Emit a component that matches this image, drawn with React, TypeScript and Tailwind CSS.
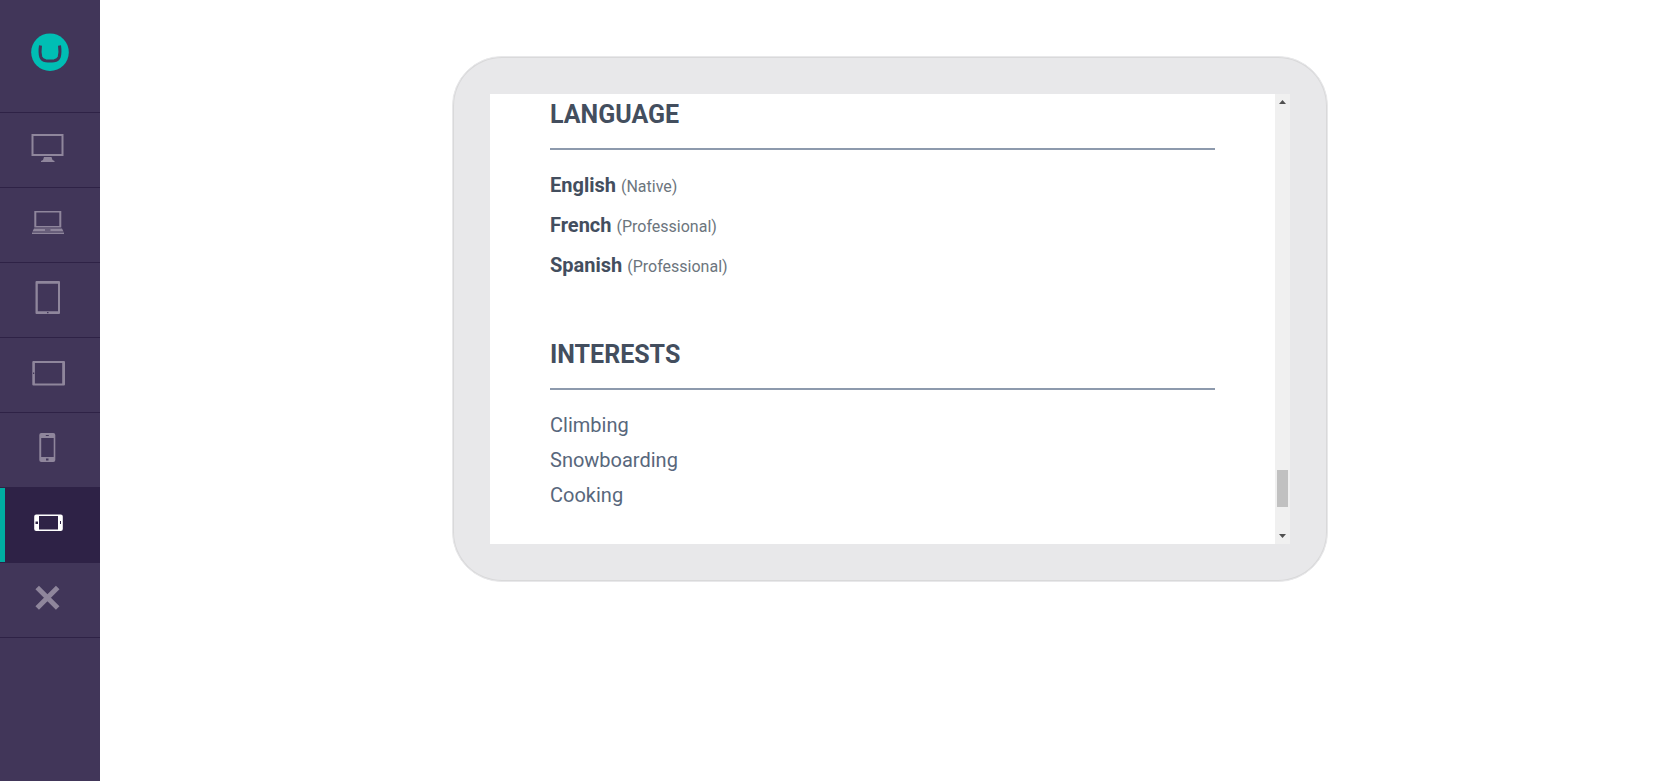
import type { ReactNode } from 'react';

const devices: { name: string; active?: boolean; icon: ReactNode }[] = [
  {
    name: 'Desktop',
    icon: (
      <>
        <path fillRule="evenodd" d="M1.500 4h32v22h-32zM3.500 6v18h28V6z" />
        <path d="M14 27h7.500l1 3 2 1v1h-13.500v-1l2-1z" />
      </>
    ),
  },
  {
    name: 'Laptop',
    icon: (
      <>
        <path fillRule="evenodd" d="M4.300 6h27v16.500h-27zM6.300 7.500v13.500h23V7.500z" />
        <path fillRule="evenodd" d="M4 23.500h28l1.500 3H2.500zM15 24.500v1h5.500v-1z" />
        <path d="M2 27.500h32V29H2z" />
      </>
    ),
  },
  {
    name: 'Tablet portrait',
    icon: (
      <path
        fillRule="evenodd"
        d="M6.500 1h22.500a1 1 0 0 1 1 1v31a1 1 0 0 1-1 1H6.500a1 1 0 0 1-1-1V2a1 1 0 0 1 1-1zM7.800 3.800V31.300H28V3.800zM17 32v1.200h1.500V32z"
      />
    ),
  },
  {
    name: 'Tablet landscape',
    icon: (
      <path
        fillRule="evenodd"
        d="M3.300 6h30.700a1 1 0 0 1 1 1v22.500a1 1 0 0 1-1 1H3.300a1 1 0 0 1-1-1V7a1 1 0 0 1 1-1zM4.900 7.900v20.500H32.200V7.900zM3 17.500V19h1.200v-1.500z"
      />
    ),
  },
  {
    name: 'Smartphone portrait',
    icon: (
      <path
        fillRule="evenodd"
        d="M11.300 3h12a2 2 0 0 1 2 2v25a2 2 0 0 1-2 2h-12a2 2 0 0 1-2-2V5a2 2 0 0 1 2-2zM11.200 8v19h12.500V8zM15.800 5v1h3V5zM16 28.500v2h2.500v-2z"
      />
    ),
  },
  {
    name: 'Smartphone landscape',
    active: true,
    icon: (
      <path
        fillRule="evenodd"
        d="M6.200 9.500h24.600a2 2 0 0 1 2 2v12.500a2 2 0 0 1-2 2H6.200a2 2 0 0 1-2-2v-12.500a2 2 0 0 1 2-2zM9 11v13.500h19V11zM5.500 16.500v2.500H8v-2.500zM30 16v3h1v-3z"
      />
    ),
  },
  {
    name: 'Exit preview',
    icon: (
      <path
        d="M7.200 7.500l20.500 20.500M27.700 7.500l-20.500 20.500"
        fill="none"
        stroke="currentColor"
        strokeWidth="5"
      />
    ),
  },
];

const languages = [
  { name: 'English', level: 'Native' },
  { name: 'French', level: 'Professional' },
  { name: 'Spanish', level: 'Professional' },
];

const interests = ['Climbing', 'Snowboarding', 'Cooking'];

function Section({ title, children }: { title: string; children: ReactNode }) {
  return (
    <section className="mb-[60px]">
      <h2 className="mb-5 border-b-2 border-[#8d9aad] pb-[18px] text-[25px] leading-[30px] font-bold text-[#434e5e] uppercase">
        {title}
      </h2>
      {children}
    </section>
  );
}

function Sidebar() {
  return (
    <aside className="w-[100px] shrink-0 bg-[#413659]">
      <div className="flex h-[113px] justify-center border-b border-[#2e2246] pt-[33px]">
        <a href="#" aria-label="Home" className="size-[38px]">
          <svg viewBox="0 0 38 38" className="size-[38px]">
            <circle cx="19" cy="19.200" r="18.800" fill="#00beb4" />
            <path
              d="M9.500 12.500c-.6 4-.6 8.500.3 11.500.8 2.400 2.700 3.400 5 3.700 2.800.3 5.600.3 8.400 0 2.300-.3 4.200-1.300 5-3.700.9-3 .9-7.500.3-11.500"
              fill="none"
              stroke="#413659"
              strokeWidth="3"
            />
          </svg>
        </a>
      </div>
      <nav>
        <ul>
          {devices.map((device) => (
            <li key={device.name} className="border-b border-[#2e2246]">
              <button
                type="button"
                aria-label={device.name}
                className={`flex h-[74px] w-full items-center border-l-[5px] pb-[5px] pl-[25px] ${
                  device.active
                    ? 'border-[#00aea2] bg-[#2e2246] text-white'
                    : 'border-transparent text-[#8f869c]'
                }`}
              >
                <svg
                  viewBox="0 0 35 35"
                  fill="currentColor"
                  className="size-[35px]"
                >
                  {device.icon}
                </svg>
              </button>
            </li>
          ))}
        </ul>
      </nav>
    </aside>
  );
}

function Scrollbar() {
  return (
    <div
      aria-hidden="true"
      className="flex w-[15px] shrink-0 flex-col items-center bg-[#f0f0f0] py-1.5 text-[#505050]"
    >
      <svg viewBox="0 0 7 4" fill="currentColor" className="h-1 w-[7px]">
        <path d="M0 4h7L3.500 0z" />
      </svg>
      <div className="grow-[366]" />
      <div className="h-[37px] w-[11px] bg-[#c1c1c1]" />
      <div className="grow-[27]" />
      <svg viewBox="0 0 7 4" fill="currentColor" className="h-1 w-[7px]">
        <path d="M0 0h7L3.500 4z" />
      </svg>
    </div>
  );
}

export default function App() {
  return (
    <div className="flex min-h-screen bg-white font-[Roboto,sans-serif]">
      <Sidebar />
      <main className="flex grow items-start justify-center pt-14 pl-[15px]">
        <div className="w-full max-w-[876px] rounded-[50px] border border-[#e8e8ea] bg-[#d9d9da] p-px">
          <div className="rounded-[48px] bg-[#e8e8ea] p-9">
            <div className="flex h-[450px] overflow-hidden bg-white">
              <div className="grow overflow-hidden px-[60px] pt-1.5">
                <Section title="Language">
                  <ul>
                    {languages.map(({ name, level }) => (
                      <li
                        key={name}
                        className="mb-2.5 text-xl leading-[30px] font-bold text-[#434e5e]"
                      >
                        {name}{' '}
                        <span className="text-base font-normal text-[#6c757d]">
                          ({level})
                        </span>
                      </li>
                    ))}
                  </ul>
                </Section>
                <Section title="Interests">
                  <ul>
                    {interests.map((interest) => (
                      <li
                        key={interest}
                        className="mb-[5px] text-xl leading-[30px] text-[#58677c]"
                      >
                        {interest}
                      </li>
                    ))}
                  </ul>
                </Section>
              </div>
              <Scrollbar />
            </div>
          </div>
        </div>
      </main>
    </div>
  );
}
